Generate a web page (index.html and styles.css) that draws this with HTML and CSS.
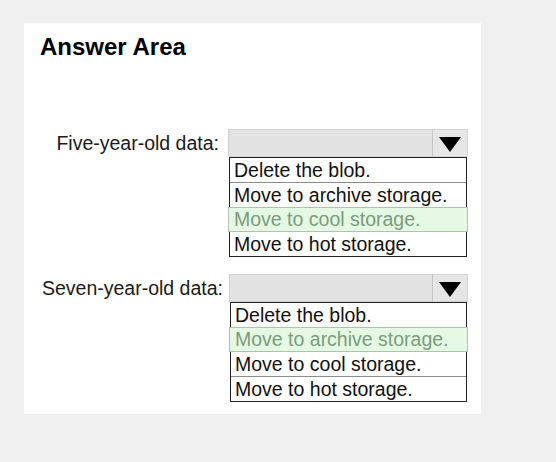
FILE: index.html
```html
<!DOCTYPE html>
<html>
<head>
<meta charset="utf-8">
<link rel="stylesheet" href="styles.css">
</head>
<body>
<div class="panel">
  <h1 class="title">Answer Area</h1>
  <div class="form">
    <div class="label">Five-year-old data:</div>
    <div class="widget">
      <div class="select">
        <div class="value"></div>
        <div class="button"><svg width="22" height="15" viewBox="0 0 22 15"><polygon points="0,0 22,0 11,15" fill="#000"/></svg></div>
      </div>
      <div class="list">
        <div class="opt">Delete the blob.</div>
        <div class="opt">Move to archive storage.</div>
        <div class="opt sel">Move to cool storage.</div>
        <div class="opt">Move to hot storage.</div>
      </div>
    </div>
    <div class="label second">Seven-year-old data:</div>
    <div class="widget second">
      <div class="select">
        <div class="value"></div>
        <div class="button"><svg width="22" height="15" viewBox="0 0 22 15"><polygon points="0,0 22,0 11,15" fill="#000"/></svg></div>
      </div>
      <div class="list">
        <div class="opt">Delete the blob.</div>
        <div class="opt sel">Move to archive storage.</div>
        <div class="opt">Move to cool storage.</div>
        <div class="opt">Move to hot storage.</div>
      </div>
    </div>
  </div>
</div>
</body>
</html>
```
FILE: styles.css
```css
html, body {
  margin: 0;
  padding: 0;
  background: #f0f0f0;
}
body {
  font-family: "Liberation Sans", Arial, sans-serif;
  color: #111;
  padding-top: 23px;
  padding-left: 24px;
  width: 556px;
  height: 462px;
  box-sizing: border-box;
}
.panel {
  width: 457px;
  background: #fff;
  box-sizing: border-box;
  padding: 10px 13px 12px 16px;
}
.title {
  margin: 0;
  font-size: 24px;
  line-height: 28px;
  font-weight: bold;
  color: #000;
}
.form {
  margin-top: 68px;
  display: grid;
  grid-template-columns: 1fr 240px;
  column-gap: 9px;
  row-gap: 17px;
  font-size: 19.5px;
}
.label {
  height: 28px;
  display: flex;
  align-items: center;
  justify-content: flex-end;
  white-space: nowrap;
  color: #1a1a1a;
}
.label.second {
  margin-right: -4px;
}
.widget.second {
  margin-left: 1px;
}
.select {
  height: 28px;
  box-sizing: border-box;
  border: 1px solid #d2d2d2;
  background: #e2e2e2;
  display: flex;
}
.value {
  flex: 1;
}
.button {
  width: 35px;
  border-left: 1px solid #c4c4c4;
  background: #e6e6e6;
  display: flex;
  align-items: center;
  justify-content: center;
  padding-top: 2px;
  box-sizing: border-box;
}
.list {
  margin: 0 1px;
  border: 1px solid #222;
  background: #fff;
}
.opt {
  height: 24px;
  line-height: 24px;
  padding-left: 4px;
  border-bottom: 1px solid #8c8c8c;
  white-space: nowrap;
  color: #111;
}
.opt:last-child {
  border-bottom: none;
}
.opt.sel {
  background: #e4f8e4;
  color: #7b9c7b;
  border: 1px solid #a9c6a9;
  height: 23px;
  line-height: 23px;
  margin: -1px -2px 0 -2px;
  padding-left: 5px;
}
```
